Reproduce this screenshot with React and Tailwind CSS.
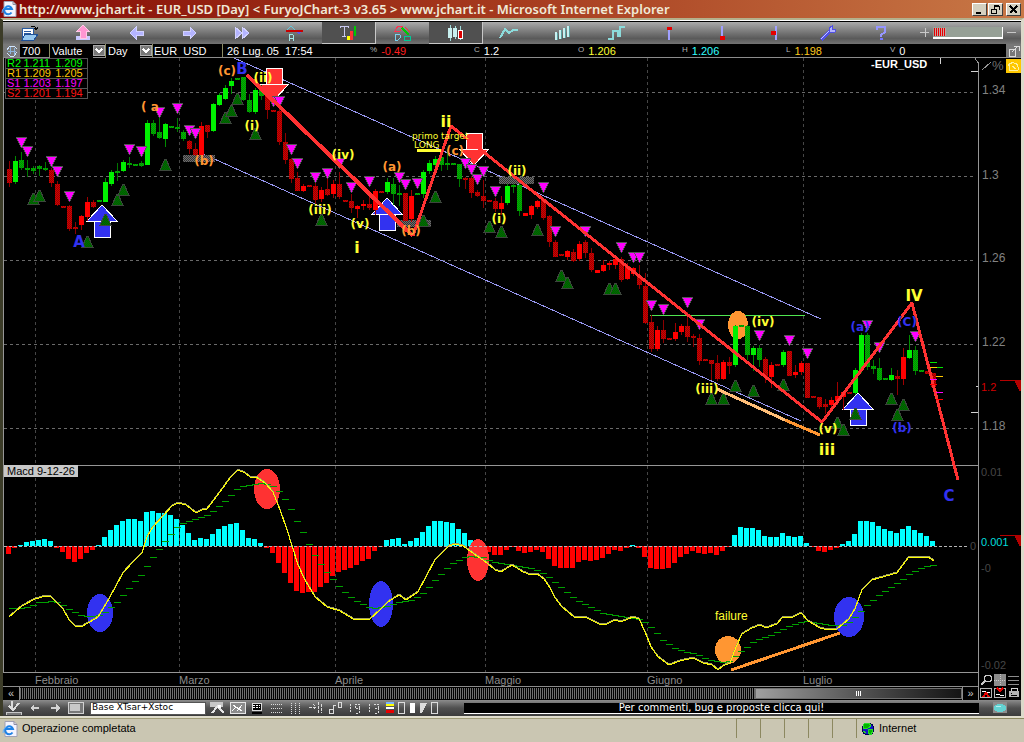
import { useState } from "react";
import clsx from "clsx";

// one row per day: body top, body bottom, high, low, kind
// kind: G / R = rising, g / r = falling
const CANDLES = [
  [169, 183, 161, 187, "r"], [161, 182, 156, 184, "G"], [160, 168, 152, 170, "g"], [168, 169, 160, 177, "g"],
  [168, 171, 166, 174, "g"], [166, 169, 165, 176, "g"], [168, 170, 162, 171, "g"], [170, 183, 168, 187, "r"],
  [184, 205, 181, 206, "r"], [206, 208, 206, 208, "r"], [206, 229, 205, 231, "r"], [227, 229, 222, 234, "r"],
  [216, 225, 215, 230, "R"], [202, 217, 197, 221, "R"], [202, 207, 200, 208, "r"], [200, 202, 200, 202, "g"],
  [182, 202, 178, 202, "G"], [172, 184, 170, 186, "G"], [171, 172, 163, 181, "g"], [162, 171, 160, 172, "G"],
  [163, 165, 157, 168, "g"], [164, 165, 164, 165, "g"], [163, 166, 161, 167, "g"], [123, 165, 120, 165, "G"],
  [123, 134, 120, 136, "g"], [132, 138, 114, 139, "g"], [124, 139, 123, 147, "G"], [126, 128, 126, 128, "g"],
  [127, 129, 118, 132, "g"], [132, 139, 130, 141, "g"], [141, 149, 140, 154, "r"], [149, 155, 143, 156, "r"],
  [126, 155, 122, 155, "R"], [125, 132, 125, 138, "r"], [104, 131, 103, 132, "G"], [95, 105, 93, 106, "G"],
  [88, 99, 85, 100, "G"], [81, 86, 78, 94, "G"], [78, 80, 78, 80, "g"], [77, 100, 77, 101, "g"],
  [100, 112, 94, 113, "g"], [90, 112, 88, 114, "G"], [90, 96, 85, 100, "g"], [96, 110, 96, 119, "r"],
  [110, 112, 110, 112, "r"], [111, 142, 108, 145, "r"], [142, 160, 133, 164, "r"], [159, 179, 158, 183, "r"],
  [178, 191, 172, 191, "r"], [186, 191, 184, 192, "R"], [185, 187, 185, 187, "r"], [186, 200, 180, 204, "r"],
  [190, 199, 187, 202, "R"], [189, 195, 175, 196, "r"], [184, 194, 180, 198, "R"], [184, 197, 172, 199, "r"],
  [200, 202, 200, 202, "r"], [201, 208, 194, 213, "r"], [206, 209, 205, 218, "R"], [204, 206, 200, 210, "R"],
  [204, 208, 195, 210, "r"], [191, 210, 189, 215, "R"], [191, 193, 191, 193, "r"], [182, 192, 178, 194, "G"],
  [184, 194, 178, 205, "g"], [193, 195, 185, 206, "g"], [193, 221, 193, 221, "r"], [196, 219, 190, 222, "R"],
  [193, 194, 193, 194, "g"], [172, 194, 170, 198, "G"], [163, 171, 160, 174, "G"], [159, 165, 156, 170, "G"],
  [157, 165, 150, 171, "g"], [163, 165, 152, 170, "g"], [163, 165, 163, 165, "g"], [164, 179, 164, 187, "g"],
  [178, 180, 177, 189, "r"], [178, 193, 176, 198, "r"], [192, 196, 190, 197, "r"], [196, 201, 180, 208, "r"],
  [200, 202, 200, 202, "r"], [201, 209, 198, 212, "r"], [203, 209, 196, 215, "R"], [186, 203, 184, 205, "G"],
  [185, 187, 184, 193, "g"], [185, 211, 183, 216, "g"], [213, 216, 213, 216, "R"], [206, 215, 205, 219, "R"],
  [201, 207, 200, 209, "R"], [200, 218, 200, 220, "r"], [216, 242, 215, 247, "r"], [242, 257, 240, 257, "r"],
  [254, 256, 254, 256, "r"], [251, 257, 250, 260, "R"], [252, 261, 249, 262, "r"], [244, 259, 241, 261, "R"],
  [242, 253, 240, 258, "r"], [253, 270, 248, 272, "r"], [270, 273, 270, 273, "R"], [265, 271, 260, 272, "R"],
  [263, 265, 261, 270, "R"], [259, 265, 257, 269, "R"], [259, 280, 257, 282, "r"], [266, 279, 263, 280, "R"],
  [268, 274, 267, 276, "R"], [276, 285, 265, 289, "r"], [286, 323, 273, 324, "r"], [322, 349, 315, 352, "r"],
  [330, 349, 326, 351, "R"], [330, 339, 320, 343, "r"], [338, 340, 338, 340, "r"], [332, 339, 323, 341, "R"],
  [326, 332, 324, 335, "R"], [326, 337, 312, 342, "r"], [336, 338, 334, 347, "r"], [338, 361, 334, 365, "r"],
  [359, 361, 359, 361, "r"], [360, 364, 360, 380, "r"], [363, 379, 355, 381, "r"], [362, 379, 360, 380, "R"],
  [362, 366, 357, 374, "r"], [326, 365, 325, 367, "G"], [325, 327, 325, 327, "g"], [326, 355, 325, 360, "g"],
  [348, 355, 346, 371, "G"], [348, 360, 345, 367, "g"], [359, 377, 357, 383, "r"], [365, 377, 362, 388, "R"],
  [364, 366, 364, 366, "r"], [352, 365, 350, 367, "G"], [351, 376, 351, 376, "r"], [372, 375, 365, 378, "R"],
  [363, 372, 361, 375, "R"], [363, 398, 363, 398, "r"], [396, 398, 396, 398, "r"], [397, 407, 397, 409, "r"],
  [404, 407, 399, 414, "r"], [400, 405, 397, 407, "R"], [396, 401, 382, 405, "R"], [392, 397, 391, 410, "R"],
  [392, 393, 392, 393, "r"], [370, 393, 368, 395, "G"], [335, 370, 333, 373, "G"], [335, 367, 333, 370, "g"],
  [366, 369, 360, 374, "g"], [368, 380, 358, 381, "g"], [378, 380, 378, 380, "g"], [375, 380, 368, 381, "G"],
  [376, 379, 370, 395, "r"], [357, 379, 348, 385, "R"], [350, 358, 335, 359, "G"], [350, 371, 346, 375, "g"],
  [370, 372, 370, 372, "g"], [371, 374, 371, 374, "r"], [373, 387, 373, 387, "r"],
];

const HISTOGRAM = [
  -8, -2, 1, 4, 5, 6, 7, 5, -2, -6, -13, -16, -13, -7, -4, 1, 9, 16, 21, 25, 27, 27, 25, 34, 35, 33, 33, 31, 27, 21,
  13, 6, 8, 7, 12, 17, 20, 22, 23, 16, 8, 7, 3, -2, -7, -17, -27, -37, -45, -47, -46, -46, -41, -37, -30, -26, -24,
  -22, -19, -15, -13, -5, -1, 6, 7, 8, 2, 5, 8, 14, 20, 25, 25, 24, 23, 17, 13, 6, 1, -4, -6, -9, -9, -4, -1, -5, -7,
  -6, -4, -6, -13, -20, -22, -22, -22, -16, -14, -15, -14, -12, -8, -4, -5, -2, 1, -2, -11, -22, -23, -23, -22, -17,
  -11, -8, -5, -7, -8, -7, -9, -5, -1, 11, 19, 18, 18, 16, 10, 9, 9, 13, 10, 9, 10, 3, -1, -5, -6, -4, -2, 2, 5, 12,
  25, 25, 24, 20, 17, 15, 13, 17, 20, 16, 13, 10, 5,
];

const MACD_LINE =
  "9,617 22,606 35,599 46,596 51,597 57,603 63,609 69,620 75,626 81,627 90,622 98,617 106,604 115,588 123,573 132,563 142,553 147,537 153,527 163,516 172,506 178,503 186,505 196,513 202,510 207,509 220,492 230,478 238,470 245,473 250,477 256,477 265,483 273,492 280,510 287,530 292,546 298,565 305,580 315,597 327,607 340,611 353,619 369,620 380,610 388,602 399,595 406,600 418,592 426,577 435,560 449,546 455,544 463,546 477,556 487,563 495,570 501,572 512,565 523,572 531,575 537,574 544,579 550,588 555,598 562,607 574,617 585,617 599,624 607,624 615,620 621,622 633,617 639,619 645,632 651,647 658,657 669,665 680,661 693,658 703,663 712,665 718,670 723,666 730,663 736,647 742,634 752,628 760,625 766,628 777,624 783,617 793,617 801,613 808,621 820,628 828,630 837,629 849,619 855,609 862,590 872,580 897,573 909,557 928,557 934,561";

const SIGNAL = [
  [9, 608], [24, 608], [33, 605], [40, 602], [51, 601], [60, 603], [68, 608], [77, 613], [84, 616], [92, 616],
  [100, 615], [108, 610], [115, 604], [121, 597], [127, 591], [132, 584], [139, 578], [145, 569], [151, 560],
  [157, 552], [162, 544], [169, 536], [175, 529], [181, 524], [188, 521], [198, 518], [208, 515], [217, 508],
  [223, 503], [229, 497], [235, 491], [240, 487], [247, 485], [258, 483], [265, 483], [271, 485], [277, 489],
  [283, 496], [289, 505], [294, 516], [301, 528], [307, 539], [312, 551], [319, 561], [325, 570], [331, 577],
  [337, 584], [343, 590], [349, 595], [355, 600], [360, 603], [367, 606], [375, 608], [388, 606], [398, 602],
  [414, 599], [420, 595], [426, 590], [432, 583], [438, 577], [444, 571], [450, 565], [456, 561], [462, 558],
  [470, 556], [482, 557], [490, 560], [498, 563], [513, 565], [523, 567], [535, 569], [545, 574], [552, 579],
  [558, 584], [564, 589], [570, 595], [576, 599], [582, 602], [588, 606], [595, 609], [601, 612], [607, 614],
  [618, 616], [637, 618], [642, 620], [649, 625], [655, 631], [660, 637], [666, 642], [672, 646], [678, 649],
  [688, 652], [696, 654], [702, 656], [708, 659], [717, 661], [727, 662], [733, 658], [738, 653], [744, 649],
  [750, 644], [756, 640], [763, 638], [774, 634], [780, 630], [787, 627], [793, 625], [800, 622], [807, 621],
  [817, 623], [828, 625], [843, 625], [852, 620], [858, 614], [864, 608], [870, 602], [876, 597], [882, 592],
  [888, 589], [894, 585], [900, 581], [906, 576], [912, 572], [918, 569], [925, 566], [934, 565],
];

const DOWN_MARKS = [
  [21, 137], [27, 146], [51, 156], [57, 166], [69, 191], [129, 144], [141, 146], [159, 107], [177, 103], [189, 125],
  [195, 128], [273, 96], [279, 96], [291, 144], [297, 158], [315, 172], [327, 168], [339, 158], [351, 182],
  [369, 176], [399, 172], [405, 179], [417, 178], [465, 158], [471, 164], [477, 174], [483, 166], [495, 186],
  [543, 182], [555, 226], [585, 226], [621, 242], [633, 252], [639, 252], [651, 300], [663, 304], [687, 297],
  [699, 319], [759, 330], [789, 335], [807, 348], [867, 320], [879, 342], [915, 331],
];

const UP_MARKS = [
  [33, 193], [39, 190], [87, 236], [105, 214], [117, 194], [123, 184], [165, 159], [225, 112], [231, 105], [237, 93],
  [255, 128], [321, 214], [435, 191], [423, 215], [489, 221], [501, 226], [537, 224], [561, 270], [567, 277],
  [609, 283], [615, 283], [711, 393], [723, 393], [735, 380], [753, 385], [783, 379], [837, 417], [843, 424],
  [855, 408], [891, 393], [903, 399], [897, 409],
];

const YELLOW = "#ffff32";
const ORANGE = "#ff9632";
const BLUE = "#3232f0";
const RED = "#ff3232";

// label, centre x, baseline, colour, size
const WAVES = [
  ["A", 79, 247, BLUE, 15], ["( a", 150, 111, ORANGE, 12], ["(b)", 204, 165, ORANGE, 12], ["(c)", 227, 75, ORANGE, 12],
  ["B", 242, 74, BLUE, 15], ["(ii)", 263, 82, YELLOW, 12], ["(i)", 252, 130, YELLOW, 12], ["(iv)", 343, 159, YELLOW, 12],
  ["(iii)", 320, 214, YELLOW, 12], ["(v)", 360, 228, YELLOW, 12], ["i", 357, 253, YELLOW, 16], ["(a)", 392, 171, ORANGE, 12],
  ["(b)", 411, 235, ORANGE, 12], ["ii", 446, 127, YELLOW, 16], ["(c)", 455, 155, ORANGE, 12], ["(ii)", 517, 175, YELLOW, 12],
  ["(i)", 499, 223, YELLOW, 12], ["(iv)", 763, 326, YELLOW, 12], ["(iii)", 707, 393, YELLOW, 12], ["(v)", 828, 433, YELLOW, 12],
  ["iii", 827, 455, YELLOW, 16], ["IV", 914, 301, YELLOW, 15], ["(C)", 907, 326, BLUE, 12], ["(a)", 860, 331, BLUE, 12],
  ["(b)", 902, 432, BLUE, 12], ["C", 949, 501, BLUE, 15],
];

const CANDLE_FILL = { G: "#00f000", g: "url(#greenMesh)", R: "#ff0000", r: "url(#redMesh)" };
const WICK = { G: "#008c00", g: "#007800", R: "#a00000", r: "#8c0000" };

const dayX = (i) => 9 + i * 6;

function signalAt(x) {
  const n = SIGNAL.findIndex((p) => p[0] >= x);
  if (n <= 0) return SIGNAL[0][1];
  const [x0, y0] = SIGNAL[n - 1];
  const [x1, y1] = SIGNAL[n];
  return Math.round(y0 + ((y1 - y0) * (x - x0)) / (x1 - x0));
}

function Mesh({ id, a, b }) {
  return (
    <pattern id={id} width="2" height="2" patternUnits="userSpaceOnUse">
      <rect width="2" height="2" fill={a} />
      <rect width="1" height="1" fill={b} />
      <rect x="1" y="1" width="1" height="1" fill={b} />
    </pattern>
  );
}

function BigArrow({ x, y, down }) {
  const s = down ? -1 : 1;
  const pts = [[0, 0], [15, 16], [8, 16], [8, 32], [-8, 32], [-8, 16], [-15, 16]];
  return (
    <g stroke="#fff" fill={down ? RED : BLUE}>
      <polygon points={pts.map(([px, py]) => `${x + px},${y + py * s}`).join(" ")} />
      <path d={`M${x - 15} ${y + 16 * s}h30`} />
    </g>
  );
}

function Chart() {
  return (
    <svg viewBox="3 58 1018 615" className="block h-auto w-full bg-black font-['Liberation_Sans',Arial,sans-serif]" shapeRendering="crispEdges" role="img" aria-label="EUR_USD">
      <defs>
        <Mesh id="greenMesh" a="#00b400" b="#008c00" />
        <Mesh id="redMesh" a="#d20000" b="#960000" />
        <Mesh id="grayMesh" a="#6e6e6e" b="#323232" />
        <Mesh id="markMesh" a="#006e00" b="#005a00" />
      </defs>

      {/* grid */}
      <g stroke="#6a6a6a" strokeDasharray="3 3">
        {[92, 176, 260, 344, 428].map((y) => (
          <path key={y} d={`M4 ${y}.5H974`} />
        ))}
      </g>
      <g stroke="#464646" strokeDasharray="3 3">
        {[35, 179, 335, 485, 647, 803].map((x) => (
          <path key={x} d={`M${x}.5 58V673`} />
        ))}
      </g>
      <path d="M3.5 58V673M4 465.5H978M978.5 62V673M3 672.5H978M975 58.5l3 4" stroke="#969696" fill="none" />
      <path d="M971 71h7M971 412h7M976 386h2M940 58v6" stroke="#d2d2d2" strokeWidth="1" />

      {/* price */}
      <g stroke="#9696f0">
        <path d="M234 58L821 319M203 154L801 421" />
      </g>
      <path d="M650 315.5H805" stroke="#50e650" />
      <g fill="url(#grayMesh)">
        <rect x="183" y="155" width="32" height="7" />
        <rect x="397" y="220" width="34" height="7" />
        <rect x="499" y="177" width="35" height="7" />
      </g>
      <ellipse cx="738" cy="325" rx="10" ry="14" fill={ORANGE} />

      <BigArrow x={102} y={205} />
      <BigArrow x={387} y={198} />
      <BigArrow x={858} y={393} />
      <BigArrow x={274} y={100} down />
      <BigArrow x={474} y={165} down />

      {CANDLES.map(([top, bottom, high, low, kind], i) => (
        <g key={i}>
          {low > high + 2 && <rect x={dayX(i)} y={high} width="1" height={low - high} fill={WICK[kind]} />}
          <rect x={dayX(i) - 2} y={top} width="5" height={Math.max(2, bottom - top)} fill={CANDLE_FILL[kind]} />
        </g>
      ))}

      {DOWN_MARKS.map(([x, y]) => (
        <path key={`${x}-${y}`} d={`M${x - 5} ${y}h11l-5 10h-1z`} fill="#ff00ff" stroke="#555" strokeWidth="1" />
      ))}
      {UP_MARKS.map(([x, y]) => (
        <path key={`${x}-${y}`} d={`M${x - 5} ${y + 11}h11l-5-11h-1z`} fill="url(#markMesh)" stroke="#3c463c" strokeWidth="1" />
      ))}

      <g fill="none" stroke={RED} strokeLinejoin="round">
        <path d="M247 75L413 236" strokeWidth="4" />
        <path d="M413 236L451 126L822 422" strokeWidth="3" />
        <path d="M451 126L822 422L912 303L958 480" strokeWidth="3" />
      </g>
      <path d="M717 389L785 420" stroke="#ffbe78" strokeWidth="3" />
      <path d="M785 420L820 435" stroke={ORANGE} strokeWidth="3" />
      <path d="M417 150.5H441" stroke={YELLOW} strokeWidth="3" />

      <path d="M930 362h7M930 367h13" stroke="#00e600" />
      <path d="M930 367h7M936 376h7" stroke="#ffc800" />
      <path d="M930 379h7M936 392h7" stroke="#ff00ff" />
      <path d="M930 384h7M936 399h7" stroke="#ff0000" />

      <g fontFamily="'DejaVu Sans', Verdana, sans-serif" fontWeight="bold" textAnchor="middle">
        {WAVES.map(([label, x, y, fill, size]) => (
          <text key={`${label}-${x}`} x={x} y={y} fill={fill} fontSize={size}>
            {label}
          </text>
        ))}
      </g>
      <g fill={YELLOW} fontFamily="'DejaVu Sans', Verdana, sans-serif" fontSize="9">
        <text x="412" y="139">primo target</text>
        <text x="414" y="148">LONG</text>
      </g>
      <text x="871" y="68" fill="#fff" fontSize="11" fontWeight="bold">-EUR_USD</text>

      {/* macd */}
      <rect x="4" y="465" width="74" height="12" fill="#c8c8c8" />
      <text x="7" y="475" fontSize="11" fill="#000">Macd 9-12-26</text>
      <ellipse cx="267" cy="489" rx="13" ry="20" fill={RED} />
      <ellipse cx="100" cy="613" rx="13" ry="19" fill={BLUE} />
      <ellipse cx="381" cy="604" rx="12" ry="23" fill={BLUE} />
      <ellipse cx="728" cy="650" rx="13" ry="14" fill={ORANGE} />
      <ellipse cx="849" cy="617" rx="15" ry="20" fill={BLUE} />
      {HISTOGRAM.map((v, i) => (
        <rect key={i} x={6 + i * 6} y={v > 0 ? 546 - v : 546} width="5" height={Math.abs(v)} fill={v > 0 ? "#00ffff" : "#ff0000"} />
      ))}
      <ellipse cx="478" cy="560" rx="11" ry="21" fill={RED} />
      <path d="M4 546.5H967" stroke="#b4b4b4" strokeDasharray="3 2" />
      {HISTOGRAM.map((_, i) => (
        <rect key={i} x={dayX(i) - (i ? 3 : 0)} y={signalAt(dayX(i))} width="7" height="1" fill="#00a000" />
      ))}
      <polyline points={MACD_LINE} fill="none" stroke="#a0a064" strokeWidth="1" transform="translate(0 -1)" />
      <polyline points={MACD_LINE} fill="none" stroke="#ffff00" strokeWidth="1" />
      <path d="M731 670L840 633" stroke={ORANGE} strokeWidth="3" />
      <text x="715" y="620" fill={YELLOW} fontSize="12">failure</text>

      {/* scale */}
      <g fill="#828282" fontSize="12">
        <text x="982" y="94">1.34</text>
        <text x="982" y="179">1.3</text>
        <text x="982" y="262">1.26</text>
        <text x="982" y="346">1.22</text>
        <text x="982" y="430">1.18</text>
      </g>
      <g fill="#464646" fontSize="11">
        <text x="981" y="476">0.01</text>
        <text x="970" y="550">0</text>
        <text x="981" y="572">-0</text>
        <text x="981" y="669">-0.02</text>
      </g>
      <text x="981" y="391" fill="#d20000" fontSize="11">1.2</text>
      <text x="981" y="546" fill="#00dcdc" fontSize="11">0.001</text>
      <g stroke="#b40000" fill="#b40000">
        <path d="M1000 380.5h20v10l-5-10" />
        <path d="M1000 535.5h20v10l-5-10" />
      </g>
      <path d="M982 70l9-8" stroke="#969696" fill="none" />
      <text x="992" y="70" fill="#6e6e6e" fontSize="13">%</text>
      <rect x="1006" y="59" width="15" height="14" fill="#ffc800" />
      <path d="M1008 66q2-4 6-3 5 1 4 7M1009 64v6h9M1012 66l4 3" stroke="#fff0a0" fill="none" />
    </svg>
  );
}

function Glyph({ children, w = 20, h = 16 }) {
  return (
    <svg width={w} height={h} viewBox={`0 0 ${w} ${h}`} shapeRendering="crispEdges" fill="none" aria-hidden="true">
      {children}
    </svg>
  );
}

const TOOLS = [
  ["Apri", <><path d="M2 15V3h11v12z" fill="#fff" stroke="#285aa0" /><path d="M4 6h7M4 8h7M4 10h5" stroke="#285aa0" /><path d="M2 15l3-6h13l-4 6z" fill="#96c8f0" stroke="#1e5096" /><path d="M11 2q4-2 5 2M14 3l2 2 2-3" stroke="#000" /></>],
  ["Carica", <><path d="M3 11h14v4H3z" fill="#c8c8ff" /><path d="M10 0l6 6h-3v7H7V6H4z" fill="#ff96d2" stroke="#ffc8e6" /></>],
  ["Indietro", <path d="M4 8l6-6v4h7v4h-7v4z" fill="#b4b4ff" stroke="#d2d2ff" />],
  ["Avanti", <path d="M17 8l-6-6v4H4v4h7v4z" fill="#b4b4ff" stroke="#d2d2ff" />],
  ["Fine", <path d="M3 2l7 6-7 6zM10 2l7 6-7 6z" fill="#b4b4ff" stroke="#d2d2ff" />],
  ["Alert", <><path d="M2 5l4-4 4 4z" stroke="#64c8dc" /><path d="M10 5h8l-4 5z" fill="#5a5ae6" /><path d="M1 6h17" stroke="#c80000" strokeWidth="2" /><path d="M4 16v-6l1-1h2l1 1v6M4 13h4" stroke="#a0e6e6" /></>],
  ["Testo", <><path d="M2 3V1h8v2M6 1v10M4 11h4" stroke="#c8c8f0" /><path d="M9 11h3v4H9z" fill="#ffff00" /><path d="M12 6h3v9h-3z" fill="#ff3232" /><path d="M16 1h2v10h-2z" fill="#00c800" /></>],
  ["Disegna", <><path d="M3 6l3-5h5l-3 5z" stroke="#ff3250" /><path d="M10 3l7 7" stroke="#00c800" strokeWidth="2" /><path d="M13 2l5 5" stroke="#ff3232" /><path d="M3 9v6h3l2-2v-3l-2-1z" stroke="#78d2f0" /><path d="M12 11v4h6v-4z" stroke="#00c896" /></>],
  ["Candele", <><path d="M5 0v16M10 1v13M15 1v14" stroke="#a0dcdc" /><path d="M3 3h4v10H3zM8 3h4v9H8z" fill="#c8f0f0" /><path d="M13 5h4v8h-4z" fill="#dc0000" stroke="#fff" /></>],
  ["Linea", <path d="M1 13l5-9 4 4 4-3h5" stroke="#8cdcdc" strokeWidth="2" />],
  ["Barre", <><path d="M5 8v7M9 5v9M13 3v10M17 1v11" stroke="#5aa0a0" strokeWidth="1" /><path d="M4 7v8M8 5v9M12 3v10M16 1v11" stroke="#c8f0f0" strokeWidth="2" /></>],
  ["Gradini", <path d="M2 14h5V6h5v5h2V2h5" stroke="#8cdcdc" strokeWidth="2" />],
  ["Alto", <><path d="M10 4v11" stroke="#a0a0ff" strokeWidth="2" /><path d="M8 2h5v3H8z" fill="#e60000" /></>],
  ["Basso", <><path d="M10 1v11" stroke="#a0a0ff" strokeWidth="2" /><path d="M8 11h5v4H8z" fill="#e60000" /></>],
  ["Medio", <><path d="M11 1v14" stroke="#a0a0ff" strokeWidth="2" /><path d="M6 6h5v4H6z" fill="#e60000" /></>],
  ["Opzioni", <><path d="M3 15l9-9" stroke="#5050e6" strokeWidth="4" /><path d="M3 14l9-9" stroke="#c8c8ff" /><path d="M11 7V3l3-2v3h3v3l-3 1z" fill="#b4b4ff" stroke="#5050e6" /></>],
  ["Aiuto", <><path d="M6 5V2h8v5l-4 3v2" stroke="#9696ff" strokeWidth="2" /><path d="M9 13h3v2H9z" fill="#7878ff" /></>],
];

function Toolbar() {
  const [on, setOn] = useState({ Testo: true, Candele: true });
  return (
    <div className="flex h-[22px] items-stretch bg-linear-to-b from-[#aaaaaa] via-[#5a5a5a] via-75% to-[#747474]">
      <div className="flex flex-[901]">
        {TOOLS.map(([name, icon]) => (
          <button
            key={name}
            type="button"
            aria-label={name}
            aria-pressed={!!on[name]}
            onClick={() => setOn({ ...on, [name]: !on[name] })}
            className={clsx("flex flex-1 items-center justify-center", on[name] && "border-r border-b border-[#c8c8c8] bg-[#505050]")}
          >
            <Glyph>{icon}</Glyph>
          </button>
        ))}
      </div>
      <div className="flex flex-[97] items-center justify-between pr-1 pl-3 text-[#c8c8c8]">
        <button type="button" aria-label="Zoom avanti"><Glyph w={10} h={10}><path d="M5 0v9M0 4.5h9" stroke="currentColor" /></Glyph></button>
        <div className="h-3 w-[70px] border-r border-b-2 border-white bg-[#96a096] px-px py-px">
          <div className="h-full w-3 bg-[repeating-linear-gradient(90deg,#e60000_0_1px,#c8a0a0_1px_2px)]" />
        </div>
        <button type="button" aria-label="Zoom indietro"><Glyph w={10} h={10}><path d="M0 4.5h9" stroke="currentColor" /></Glyph></button>
      </div>
    </div>
  );
}

function MiniSelect({ label, value, className }) {
  return (
    <label className={clsx("flex items-center border-l border-[#8c8c64]", className)}>
      <select aria-label={label} defaultValue={value} className="min-w-0 flex-1 appearance-none bg-black pl-[2px] text-[11px] text-white outline-none">
        <option>{value}</option>
      </select>
      <span className="flex h-[11px] w-3 items-center justify-center border border-[#aaa] bg-[#787878]">
        <Glyph w={8} h={6}><path d="M1 1l3 3 3-3" stroke="#fff" strokeWidth="2" /></Glyph>
      </span>
    </label>
  );
}

const QUOTES = [
  ["%", "-0.49", "text-[#ff1e1e]"],
  ["C", "1.2", "text-white"],
  ["O", "1.206", "text-[#ffff32]"],
  ["H", "1.206", "text-[#32ffff]"],
  ["L", "1.198", "text-[#ffc81e]"],
  ["V", "0", "text-white"],
];

function InfoBar() {
  return (
    <div className="flex h-[14px] items-stretch border-b border-[#8c8c8c] bg-black text-[11px] leading-[14px] text-white">
      <button type="button" aria-label="Aggiorna" className="flex w-[17px] shrink-0 items-center justify-center bg-[#787878]">
        <Glyph w={14} h={12}>
          <path d="M2 5l3-4h4l3 3M12 7l-3 4H5L2 8" stroke="#d2e6ff" />
          <path d="M5 2v7M9 3v7M3 6h8" stroke="#8cb4dc" />
        </Glyph>
      </button>
      <input aria-label="Giorni" defaultValue="700" className="w-[29px] shrink-0 bg-black pl-[2px] text-[11px] outline-none" />
      <MiniSelect label="Mercato" value="Valute" className="w-14 shrink-0" />
      <MiniSelect label="Periodo" value="Day" className="w-[47px] shrink-0" />
      <div className="w-[70px] shrink-0 border-l border-[#8c8c64] pl-px whitespace-pre">EUR  USD</div>
      <div className="w-[148px] shrink-0 border-l border-[#8c8c64] pl-1 whitespace-pre">26 Lug. 05  17:54</div>
      <div className="grid flex-1 grid-cols-6 pr-3">
        {QUOTES.map(([name, value, tone]) => (
          <div key={name} className="flex gap-1">
            <span className="text-[8px] leading-[11px] text-[#b4b4b4]">{name}</span>
            <span className={tone}>{value}</span>
          </div>
        ))}
      </div>
      <button type="button" aria-label="Stacca finestra" className="flex w-[15px] shrink-0 items-center justify-center bg-[#787878]">
        <Glyph w={12} h={12}><path d="M1 4h6v7H1zM4 7l6-6M6 1h5v5" stroke="#dcdcdc" /></Glyph>
      </button>
    </div>
  );
}

const PIVOTS = [
  ["R2", "1.211", "1.209", "text-[#00ff00]"],
  ["R1", "1.209", "1.205", "text-[#ffc800]"],
  ["S1", "1.203", "1.197", "text-[#ff00ff]"],
  ["S2", "1.201", "1.194", "text-[#ff1414]"],
];

function Pivots() {
  return (
    <table className="absolute top-0 left-[2px] w-[83px] border-collapse border border-[#555] bg-black text-[11px]">
      <tbody>
        {PIVOTS.map(([name, a, b, tone]) => (
          <tr key={name} className={clsx("h-[10px] border-b border-[#555] leading-[9px]", tone)}>
            <th scope="row" className="p-0 pl-px text-left font-normal">{name}</th>
            <td className="p-0">{a}</td>
            <td className="p-0">{b}</td>
          </tr>
        ))}
      </tbody>
    </table>
  );
}

const SIDE_ICONS = [
  ["Lente", <><circle cx="8" cy="4.5" r="3.5" stroke="#c8c8c8" /><path d="M5 7l-4 4" stroke="#c8c8c8" strokeWidth="2" /></>],
  ["Griglia", <><path d="M0 0h12v12H0z" fill="#8c8c8c" /><path d="M0 6h12M6 0v12" stroke="#c8c8c8" strokeDasharray="1 1" /></>],
  ["Elenco", <path d="M0 2.5h11M0 6.5h11M0 10.5h11" stroke="#8c8c8c" />],
  ["Pannello giù", <><path d="M.5 1.5h11v9H.5z" stroke="#b4b4b4" /><path d="M2 5q2-2 4 0t4 0" stroke="#fff" /><path d="M3 10l3-4 3 4" stroke="#e60000" strokeWidth="2" /></>],
  ["Pannello su", <><path d="M.5 1.5h11v9H.5z" stroke="#b4b4b4" /><path d="M2 8q2-2 4 0t4 0" stroke="#fff" /><path d="M3 1l3 3 3-3" stroke="#e60000" strokeWidth="2" /></>],
  ["Stampa", <><path d="M3 4V1h6v3" stroke="#d2d2d2" /><path d="M1 4h10v6H1z" fill="#b4b4b4" /><path d="M3 8h6M3 6h1" stroke="#000" /></>],
];

function Timeline() {
  return (
    <div className="flex bg-black">
      <div className="min-w-0 flex-1 border-r border-[#969696]">
        <div className="grid h-[14px] grid-cols-[32fr_144fr_156fr_150fr_162fr_156fr_175fr] border-b border-[#8c8c8c] text-[11px] leading-[14px] text-[#8c8c8c]">
          <span />
          {["Febbraio", "Marzo", "Aprile", "Maggio", "Giugno", "Luglio"].map((m) => (
            <span key={m}>{m}</span>
          ))}
        </div>
        <div className="flex h-[13px] items-stretch text-[11px] leading-[11px] text-[#c8c8c8]">
          <button type="button" aria-label="Scorri indietro" className="w-[17px] border-r border-[#8c8c8c]">«</button>
          <div className="my-px flex flex-1 bg-[repeating-linear-gradient(90deg,#6e6e6e_0_1px,#000_1px_2px)]">
            <div className="ml-auto flex w-[22%] items-center justify-center gap-px border border-[#6e6e6e] bg-linear-to-r from-[#a0a0a0] to-[#141414]">
              <i className="h-[5px] w-px bg-white" />
              <i className="h-[5px] w-px bg-white" />
              <i className="h-[5px] w-px bg-white" />
            </div>
          </div>
          <button type="button" aria-label="Scorri avanti" className="w-4 border-l border-[#8c8c8c]">»</button>
        </div>
      </div>
      <div className="grid w-[42px] grid-cols-3 place-items-center">
        {SIDE_ICONS.map(([name, icon]) => (
          <button key={name} type="button" aria-label={name}>
            <Glyph w={12} h={12}>{icon}</Glyph>
          </button>
        ))}
      </div>
    </div>
  );
}

const NAV_ICONS = [
  ["Salva", <><path d="M0 11h15v3H0z" fill="#787878" stroke="#c8c8c8" /><path d="M6 0v7M3 5l4 4 6-7" stroke="#dcdcdc" strokeWidth="2" /></>],
  ["Precedente", <path d="M3 7l4-4v3h5v2H7v3z" fill="#d2d2d2" />],
  ["Successivo", <path d="M13 7L9 3v3H4v2h5v3z" fill="#d2d2d2" />],
  ["Schermo", <><path d="M.5 1.5h15v11H.5z" fill="#787878" stroke="#d2d2d2" /><path d="M2 3h10v7H2z" fill="#c8c8c8" /></>],
];

const VIEW_ICONS = [
  ["Modifica", <><path d="M0 1h13v5H0z" fill="#c8c8c8" /><path d="M2 12l5-6M7 5l7 7" stroke="#e6e6e6" strokeWidth="2" /><path d="M8 4h3v3H8z" fill="#fff" /></>],
  ["Immagine", <><path d="M.5 1.5h15v11H.5z" fill="#8c8c8c" stroke="#e6e6e6" /><path d="M3 4l9 6M12 4l-5 6M2 10l4-4" stroke="#fff" /></>],
  ["Dati", <><path d="M3 2h9v7H3z" fill="#000" stroke="#dcdcdc" /><path d="M4 4h7M4 6h7" stroke="#fff" strokeDasharray="2 1" /><path d="M3 12h10" stroke="#000" strokeWidth="2" /></>],
  ["Righe", <path d="M2 3h12M2 7h12M2 11h12" stroke="#dcdcdc" strokeDasharray="1 1" />],
  ["Colonne", <path d="M3 2v11M7 2v11M11 2v11" stroke="#dcdcdc" strokeDasharray="1 1" />],
  ["Allinea", <path d="M1 6h7M5 3l3 3-3 3M10 1v11M13 3v9" stroke="#dcdcdc" strokeDasharray="3 1" />],
  ["Log", <path d="M2 8v4h4V8zM6 9V4h3M11 1h3v5h-3z" stroke="#dcdcdc" />],
  ["Scala 19", <path d="M3 3v9M8 3h4v4H8zM12 7v5H9" stroke="#dcdcdc" strokeDasharray="2 1" />],
  ["Scala 13", <path d="M3 3v9M8 3h4v4H9M12 7v5H8" stroke="#dcdcdc" strokeDasharray="2 1" />],
];

function BottomBar() {
  return (
    <div className="flex h-4 items-center bg-linear-to-b from-[#8c8c8c] via-[#505050] to-[#3c3c3c]">
      <div className="flex w-[85px] shrink-0 justify-between pr-1 pl-[3px]">
        {NAV_ICONS.map(([name, icon]) => (
          <button key={name} type="button" aria-label={name}>
            <Glyph w={16} h={14}>{icon}</Glyph>
          </button>
        ))}
      </div>
      <input
        aria-label="Modello"
        defaultValue="Base XTsar+Xstoc"
        className="ml-[2px] h-[13px] w-[116px] shrink-0 border border-[#555] bg-white px-px font-['DejaVu_Sans',Verdana,sans-serif] text-[9px] text-black outline-none"
      />
      <div className="ml-1 flex w-[172px] shrink-0 justify-between">
        {VIEW_ICONS.map(([name, icon]) => (
          <button key={name} type="button" aria-label={name}>
            <Glyph w={16} h={14}>{icon}</Glyph>
          </button>
        ))}
      </div>
      <button type="button" aria-label="Colori" className="ml-1 shrink-0">
        <Glyph w={54} h={14}>
          <path d="M0 1h8v2H0z" fill="#78b4ff" />
          <path d="M0 3h8v2H0z" fill="#ffff00" />
          <path d="M0 6h8v2H0z" fill="#fff" />
          <path d="M0 9h8v3H0z" fill="#e60000" />
          <path d="M12.500 1.500h6v11h-6zM45.500 1.500h6v11h-6z" stroke="#dcdcdc" />
          <path d="M24 2h5v10h-5z" fill="#fff" />
          <path d="M34 2h7l-5 10h-2z" fill="#dcdcdc" />
        </Glyph>
      </button>
      <a href="#commenti" className="ml-6 flex h-[11px] flex-1 items-center justify-center border-b border-white bg-black font-['DejaVu_Sans',Verdana,sans-serif] text-[10px] leading-[10px] text-white">
        Per commenti, bug e proposte clicca qui!
      </a>
      <div className="flex w-[42px] shrink-0 justify-center">
        <Glyph w={14} h={12}>
          <path d="M0 0h14v11H0z" fill="#8c8c8c" />
          <ellipse cx="7" cy="6" rx="6" ry="4" fill="#64d2d2" />
          <path d="M3 4h5" stroke="#b4f0f0" />
        </Glyph>
      </div>
    </div>
  );
}

function IeIcon({ size = 16 }) {
  return (
    <svg width={size} height={size} viewBox="0 0 16 16" fill="none" aria-hidden="true">
      <path d="M3 .5h9l3 3v12H3z" fill="#f4f4ff" stroke="#a0a0b4" />
      <path d="M12 .5v3h3" stroke="#8c8ca0" />
      <path d="M10.500 11.500A4 4 0 1 1 11 8H4" stroke="#1e82e6" strokeWidth="2" />
      <path d="M1 12q-1-3 4-7" stroke="#64b4ff" />
    </svg>
  );
}

const WINDOW_BUTTON = "flex h-[13px] w-[15px] items-center justify-center border border-t-white border-r-[#404040] border-b-[#404040] border-l-white bg-[#d4d0c0]";

function TitleBar() {
  return (
    <header className="flex h-[18px] items-center bg-linear-to-r from-[#860606] via-[#a63a1e] to-[#c87846] pr-[3px] pl-px">
      <IeIcon />
      <h1 className="ml-[2px] flex-1 truncate font-['Noto_Sans',Tahoma,sans-serif] text-[13px] leading-[18px] font-semibold text-[#f0ead8]">
        http://www.jchart.it - EUR_USD [Day] &lt; FuryoJChart-3 v3.65 &gt; www.jchart.it - Microsoft Internet Explorer
      </h1>
      <button type="button" aria-label="Riduci a icona" className={WINDOW_BUTTON}>
        <Glyph w={9} h={9}><path d="M1 8h5" stroke="#000" strokeWidth="2" /></Glyph>
      </button>
      <button type="button" aria-label="Ripristina" className={clsx(WINDOW_BUTTON, "ml-px")}>
        <Glyph w={9} h={9}><path d="M3 1h5v4M.5 4.500h5v4h-5zM3 1v3M0 4h6M3 .5h5" stroke="#000" /></Glyph>
      </button>
      <button type="button" aria-label="Chiudi" className={clsx(WINDOW_BUTTON, "ml-[3px]")}>
        <Glyph w={9} h={9}><path d="M1 1l7 7M8 1l-7 7" stroke="#000" strokeWidth="2" /></Glyph>
      </button>
    </header>
  );
}

function StatusBar() {
  return (
    <footer className="flex h-[26px] items-stretch border-t-2 border-[#e0ddcc] bg-[#cac6b2] pb-1 text-[11px] text-black">
      <div className="flex flex-1 items-center gap-1 border-t border-[#a09c78] pl-[2px]">
        <IeIcon />
        <span>Operazione completata</span>
      </div>
      {[0, 1, 2, 3, 4].map((n) => (
        <div key={n} className="w-6 border-t border-l border-[#8c8860]" />
      ))}
      <div className="flex w-[168px] items-center gap-1 border-t border-l border-[#8c8860] pl-1">
        <Glyph w={14} h={14}>
          <circle cx="7" cy="7" r="6" fill="#1414c8" stroke="#000050" />
          <path d="M3 2l5-1 2 3-4 3-4-1zM8 7l4 1-2 5-3-2zM2 9l3 2" fill="#00b400" stroke="#28dc28" />
        </Glyph>
        <span>Internet</span>
      </div>
    </footer>
  );
}

export default function App() {
  return (
    <div className="min-h-screen bg-[#cac6b2] font-['Liberation_Sans',Arial,sans-serif]">
      <TitleBar />
      <main className="border-t-2 border-r-[3px] border-l-[3px] border-t-[#b4b08c] border-r-[#dcd9ca] border-l-[#3c3c28]">
        <div className="h-[2px] border-t border-white bg-black" />
        <Toolbar />
        <InfoBar />
        <div className="relative">
          <Chart />
          <Pivots />
        </div>
        <Timeline />
        <BottomBar />
      </main>
      <StatusBar />
    </div>
  );
}
